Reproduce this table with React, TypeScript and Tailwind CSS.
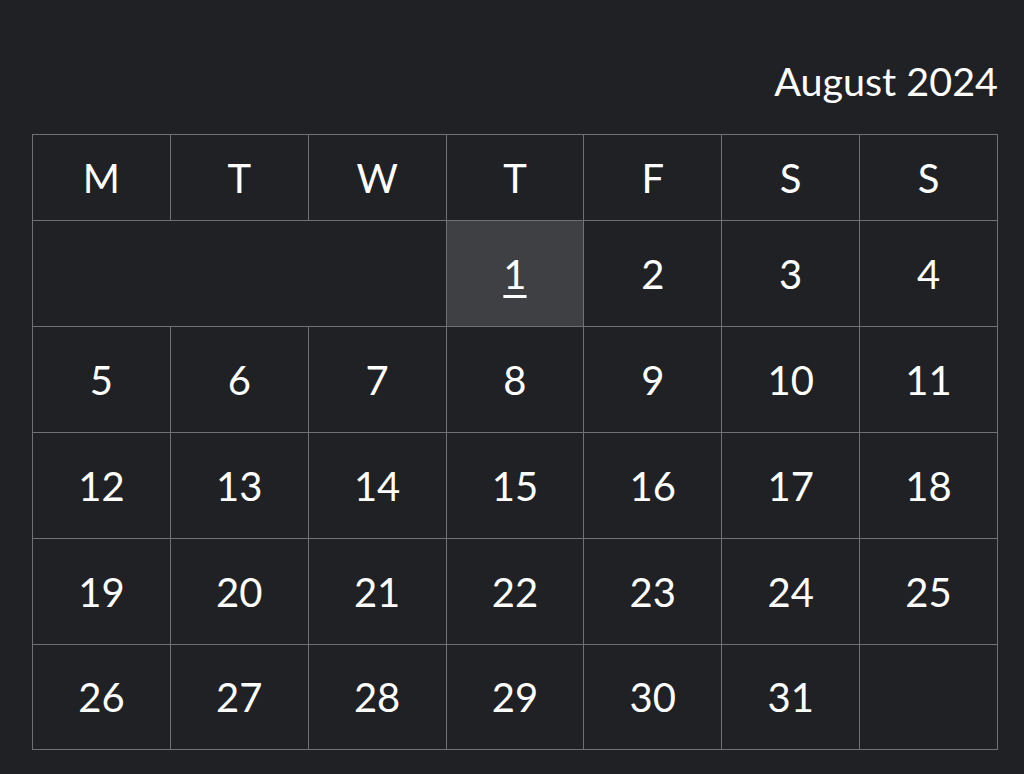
import React from "react";

const heads = ["M", "T", "W", "T", "F", "S", "S"];
const weeks: (number | null)[][] = [
  [5, 6, 7, 8, 9, 10, 11],
  [12, 13, 14, 15, 16, 17, 18],
  [19, 20, 21, 22, 23, 24, 25],
  [26, 27, 28, 29, 30, 31, null],
];

const cell = "border border-[#707175] text-center p-0";

export default function App() {
  return (
    <div
      className="w-[1024px] h-[774px] bg-[#202125] text-white overflow-hidden"
      style={{ fontFamily: "Lato, 'Open Sans', sans-serif" }}
    >
      <div className="pt-[57px] pl-[32px]">
        <div className="w-[966px] flex justify-end text-[39.5px] leading-[48px] pb-[29px]">
          August 2024
        </div>
        <table className="w-[966px] border-collapse table-fixed text-[40px]">
          <thead>
            <tr className="h-[86px]">
              {heads.map((h, i) => (
                <th key={i} className={cell + " font-normal"}>
                  {h}
                </th>
              ))}
            </tr>
          </thead>
          <tbody>
            <tr className="h-[106px]">
              <td colSpan={3} className={cell}></td>
              <td className={cell + " bg-[#3f4044]"}>
                <span className="underline underline-offset-[6px] decoration-[3px]">1</span>
              </td>
              <td className={cell}>2</td>
              <td className={cell}>3</td>
              <td className={cell}>4</td>
            </tr>
            {weeks.map((w, wi) => (
              <tr key={wi} className={wi === 3 ? "h-[105px]" : "h-[106px]"}>
                {w.map((d, di) => (
                  <td key={di} className={cell}>
                    {d ?? ""}
                  </td>
                ))}
              </tr>
            ))}
          </tbody>
        </table>
      </div>
    </div>
  );
}
